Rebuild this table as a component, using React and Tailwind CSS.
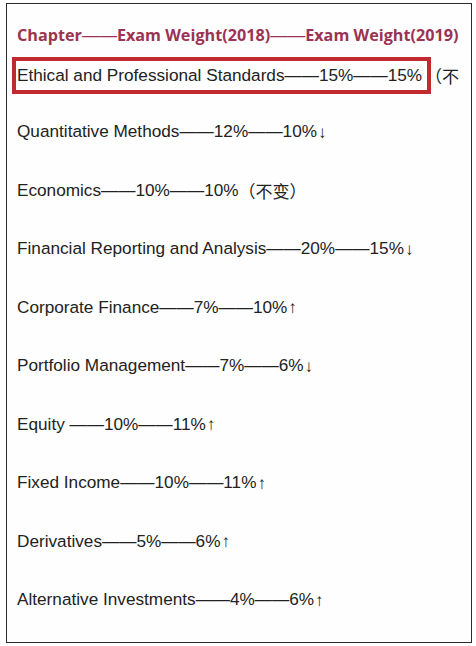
export default function App() {
  const rows = [
    ["Quantitative Methods——12%——10%", "↓"],
    ["Economics——10%——10%", "（不变）"],
    ["Financial Reporting and Analysis——20%——15%", "↓"],
    ["Corporate Finance——7%——10%", "↑"],
    ["Portfolio Management——7%——6%", "↓"],
    ["Equity ——10%——11%", "↑"],
    ["Fixed Income——10%——11%", "↑"],
    ["Derivatives——5%——6%", "↑"],
    ["Alternative Investments——4%——6%", "↑"],
  ];
  const Dash = () => (
    <span className="font-['Liberation_Sans',sans-serif] font-normal text-[17.5px]">——</span>
  );
  return (
    <div className="w-[476px] h-[646px] bg-white pt-[3px] pl-[6px]">
      <div className="w-[466px] h-[640px] border-[1.5px] border-[#2a2a2a] bg-[#fefefe] overflow-hidden">
        <div className="pl-[10px] pt-[20px] h-[42px] flex items-center text-[16.2px] font-bold text-[#9b3352] whitespace-nowrap font-['Open_Sans',sans-serif] leading-[22px]">
          <span>Chapter</span>
          <Dash />
          <span>Exam Weight(2018)</span>
          <Dash />
          <span>Exam Weight(2019)</span>
        </div>
        <div className="mt-[11px] flex items-center whitespace-nowrap font-['Liberation_Sans','Noto_Sans_CJK_SC',sans-serif] text-[17.2px] text-[#222]">
          <div className="ml-[5px] w-[419px] h-[37px] border-4 border-[#c22a30] pl-[1px] flex items-center">
            Ethical and Professional Standards——15%——15%
          </div>
          <span className="ml-[-6px] font-['Noto_Sans_CJK_SC',sans-serif] text-[17px]">（不</span>
        </div>
        <div className="pl-[10px] font-['Liberation_Sans','Noto_Sans_CJK_SC',sans-serif] text-[17.2px] text-[#222] whitespace-nowrap">
          {rows.map(([t, s], i) => (
            <div key={i} className="h-[58.5px] flex items-center first:mt-[9px]">
              <span>{t}</span>
              {s.length === 1 ? (
                <span className="text-[17px] ml-[1px]">{s}</span>
              ) : (
                <span className="font-['Noto_Sans_CJK_SC',sans-serif] text-[17px]">{s}</span>
              )}
            </div>
          ))}
        </div>
      </div>
    </div>
  );
}
